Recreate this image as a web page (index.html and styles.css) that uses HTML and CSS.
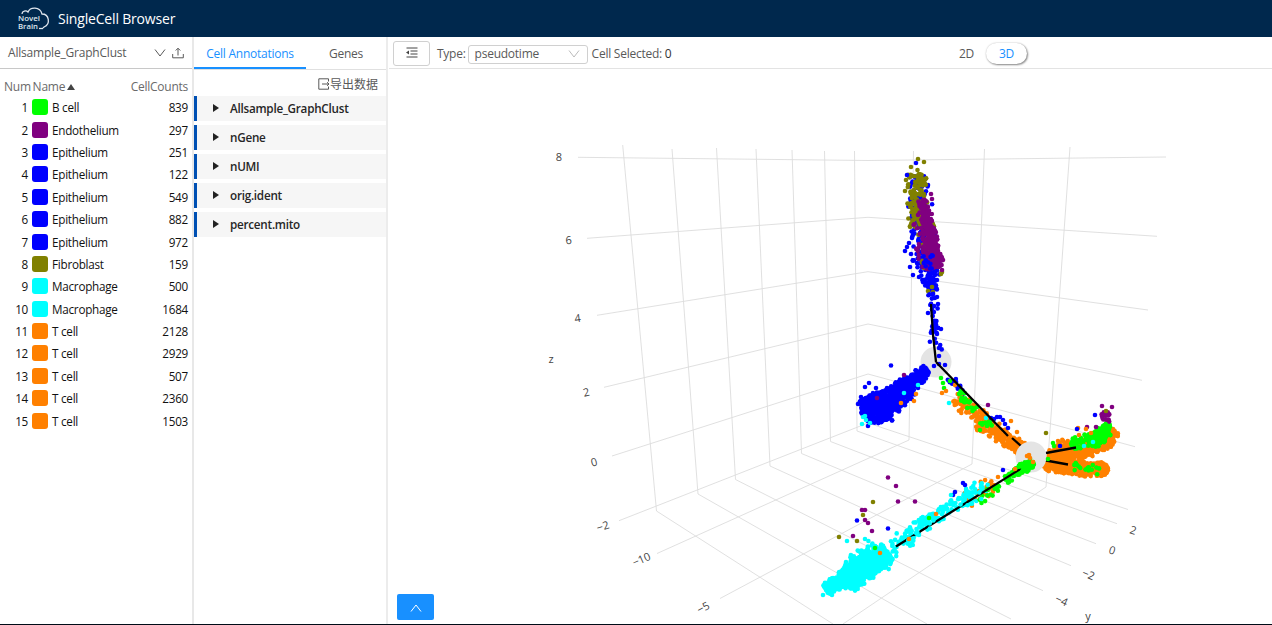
FILE: index.html
```html
<!DOCTYPE html>
<html lang="en">

<head>
    <meta charset="UTF-8">
    <meta name="viewport" content="width=device-width, initial-scale=1.0">
    <title>SingleCell Browser</title>
    <link rel="stylesheet" href="styles.css">
    <script src="plot.js" defer></script>
</head>

<body>
    <header class="top-bar">
        <svg class="logo" width="34" height="24" viewBox="0 0 34 24">
            <path d="M5 7 C5 4 9 3 11 5 C13 0 23 -1 25 7 C32 7 34 17 27 20 L26 21" />
            <text x="1" y="14" textLength="22" lengthAdjust="spacingAndGlyphs">Novel</text>
            <text x="1" y="22" textLength="20" lengthAdjust="spacingAndGlyphs">Brain</text>
            <path class="thin" d="M22 21.500h4" />
        </svg>
        <h1>SingleCell Browser</h1>
    </header>

    <main>
        <!-- Cluster list -->
        <section class="clusters">
            <div class="cluster-select">
                <span>Allsample_GraphClust</span>
                <svg class="arrow" width="12" height="8" viewBox="0 0 12 8"><path d="M1 .5l5 6.500 5-6.500" /></svg>
                <svg class="upload" width="12" height="12" viewBox="0 0 12 12"><path d="M.7 7v3.800h10.600V7M6 8.500V1.500M3.700 3.500L6 1.200l2.300 2.300" /></svg>
            </div>
            <table>
                <colgroup>
                    <col class="col-num">
                    <col class="col-swatch">
                    <col class="col-name">
                    <col class="col-count">
                </colgroup>
                <thead>
                    <tr><th colspan="3" class="name">Num Name<i class="sort"></i></th><th class="count">CellCounts</th></tr>
                </thead>
                <tbody id="clusterRows"></tbody>
            </table>
        </section>

        <!-- Annotations -->
        <section class="annotations">
            <nav class="tabs">
                <a class="active" href="#">Cell Annotations</a>
                <a href="#">Genes</a>
            </nav>
            <div class="export">
                <svg width="12" height="12" viewBox="0 0 12 12"><path d="M10.500 3.500V.8H.8v10.400h9.700V8.500M4 6h7M9 4.200L11 6 9 7.800" /></svg>
                <span>导出数据</span>
            </div>
            <ul>
                <li>Allsample_GraphClust</li>
                <li>nGene</li>
                <li>nUMI</li>
                <li>orig.ident</li>
                <li>percent.mito</li>
            </ul>
        </section>

        <!-- Plot -->
        <section class="plot">
            <div class="toolbar">
                <button class="fold">
                    <svg width="12" height="11" viewBox="0 0 12 11"><path d="M.5 1h11M4.500 4h7M4.500 7h7M.5 10h11" /><path class="fill" d="M0 5.500l3-2v4z" /></svg>
                </button>
                <label>Type:</label>
                <div class="select">
                    <span>pseudotime</span>
                    <svg width="12" height="8" viewBox="0 0 12 8"><path d="M1 .5l5 6.500 5-6.500" /></svg>
                </div>
                <span class="selected">Cell Selected: <b>0</b></span>
                <div class="dimension">
                    <a href="#">2D</a>
                    <a class="active" href="#">3D</a>
                </div>
            </div>
            <div class="scene">
                <svg id="scatter" width="883" height="555" viewBox="389 69 883 555"></svg>
                <button class="expand">
                    <svg width="12" height="8" viewBox="0 0 12 8"><path d="M1 7.500L6 1l5 6.500" /></svg>
                </button>
            </div>
        </section>
    </main>
</body>

</html>
```
FILE: styles.css
```css
/* General styles */
* {
    box-sizing: border-box;
}

body {
    margin: 0;
    height: 625px;
    overflow: hidden;
    display: flex;
    flex-direction: column;
    font-family: "Open Sans", "Noto Sans CJK SC", sans-serif;
    font-size: 12px;
    letter-spacing: -0.25px;
    color: #595959;
    background: #fff;
    border-bottom: 1px solid #000c17;
}

a {
    color: inherit;
    text-decoration: none;
}

svg path {
    fill: none;
    stroke: currentColor;
}

svg path.fill {
    fill: currentColor;
    stroke: none;
}

/* Header */
.top-bar {
    flex: none;
    height: 37px;
    display: flex;
    align-items: center;
    padding-left: 17px;
    gap: 7px;
    color: #fff;
    background: #00284d;
}

.top-bar h1 {
    margin: 0;
    font-size: 14px;
    font-weight: 400;
    letter-spacing: -0.18px;
}

.logo {
    color: #dfe6ee;
    margin-top: 1px;
}

.logo path {
    stroke-width: 1.3;
}

.logo text {
    font-size: 7.5px;
    font-weight: 600;
    letter-spacing: 0;
    fill: currentColor;
}

main {
    flex: 1;
    min-height: 0;
    display: grid;
    grid-template-columns: 194px 195px 1fr;
}

/* Cluster list */
.clusters {
    width: 194px;
    border-right: 2px solid #e8e8e8;
}

.cluster-select {
    height: 32px;
    display: flex;
    align-items: center;
    padding: 0 8px;
    letter-spacing: -0.2px;
    border-bottom: 1px solid #c8c8c8;
}

.cluster-select .arrow {
    margin-left: auto;
    margin-right: 6px;
}

table {
    margin-top: 7px;
    width: 188px;
    table-layout: fixed;
    border-collapse: collapse;
    color: #111;
}

.col-num {
    width: 32px;
}

.col-swatch {
    width: 20px;
}

.col-count {
    width: 60px;
}

th {
    height: 20px;
    padding: 0;
    font-weight: 400;
    color: #6a6a6a;
}

th.name {
    padding-left: 4px;
    word-spacing: -1px;
}

td {
    height: 22.4px;
    padding: 0;
    line-height: 16px;
    font-size: 11.7px;
}

td.num {
    text-align: right;
    padding-right: 4px;
}

.name {
    text-align: left;
}

.count {
    text-align: right;
}

.sort {
    display: inline-block;
    margin: 0 0 1px 2px;
    border: 4px solid transparent;
    border-top: 0;
    border-bottom: 6px solid #444;
}

.swatch {
    display: block;
    width: 16px;
    height: 16px;
    border-radius: 3px;
}

/* Annotations */
.annotations {
    width: 194px;
    border-right: 2px solid #ececec;
}

.tabs {
    height: 33px;
    display: flex;
    border-bottom: 1px solid #e0e0e0;
}

.tabs a {
    height: 32px;
    line-height: 34px;
    width: 112px;
    text-align: center;
}

.tabs a + a {
    width: 80px;
}

.tabs .active {
    color: #1890ff;
    border-bottom: 2px solid #1890ff;
}

.export {
    height: 26px;
    padding: 2px 8px 0 0;
    display: flex;
    align-items: center;
    justify-content: flex-end;
    letter-spacing: 0;
}

.annotations ul {
    list-style: none;
    margin: 0;
    padding: 0;
}

.annotations li {
    display: flex;
    align-items: center;
    height: 25px;
    margin-bottom: 4px;
    padding: 0 0 1px 16px;
    border-left: 3px solid #0050b3;
    background: #f6f6f6;
    color: #262626;
    font-size: 11.7px;
    font-weight: 600;
}

.annotations li::before {
    content: "";
    margin-right: 11px;
    border: 4px solid transparent;
    border-left: 6px solid #222;
    border-right: 0;
}

/* Plot */
.toolbar {
    height: 32px;
    padding: 2px 245px 0 4px;
    display: flex;
    align-items: center;
    border-bottom: 1px solid #e3e3e3;
}

.fold {
    width: 37px;
    height: 25px;
    padding: 0;
    margin-right: 7px;
    border: 1px solid #d0d0d0;
    border-radius: 3px;
    background: #fff;
    color: #444;
}

.select {
    width: 120px;
    height: 19px;
    margin: 1px 4px 0 2px;
    padding: 0 7px 1px 6px;
    display: flex;
    align-items: center;
    justify-content: space-between;
    border: 1px solid #d0d0d0;
    border-radius: 3px;
}

.select svg {
    color: #bbb;
}

.selected b {
    font-weight: 400;
    color: #333;
}

.dimension {
    margin-left: auto;
    display: flex;
    align-items: center;
    gap: 12px;
}

.dimension .active {
    width: 41px;
    height: 21px;
    line-height: 21px;
    text-align: center;
    border-radius: 11px;
    color: #1890ff;
    box-shadow: 1px 1px 2px #888, 0 0 2px #ccc;
}

.scene {
    position: relative;
}

#scatter {
    display: block;
}

#scatter text {
    font-size: 11px;
    letter-spacing: 0;
    fill: #444;
    text-anchor: middle;
}

#scatter .grid {
    stroke: #dcdcdc;
    stroke-width: 0.9;
    fill: none;
}

#scatter .path {
    stroke: #000;
    stroke-width: 2.3;
    fill: none;
}

#scatter .node {
    fill: #e4e4e4;
}

.expand {
    position: absolute;
    left: 8px;
    bottom: 4px;
    width: 37px;
    height: 26px;
    padding: 0;
    border: 0;
    border-radius: 2px;
    background: #1890ff;
    color: #fff;
}
```
FILE: plot.js
```js
const COLORS = {
    green: '#00ff00',
    purple: '#800080',
    blue: '#0000ff',
    olive: '#808000',
    cyan: '#00ffff',
    orange: '#ff8000'
};

const clusters = [
    ['B cell', 'green', 839],
    ['Endothelium', 'purple', 297],
    ['Epithelium', 'blue', 251],
    ['Epithelium', 'blue', 122],
    ['Epithelium', 'blue', 549],
    ['Epithelium', 'blue', 882],
    ['Epithelium', 'blue', 972],
    ['Fibroblast', 'olive', 159],
    ['Macrophage', 'cyan', 500],
    ['Macrophage', 'cyan', 1684],
    ['T cell', 'orange', 2128],
    ['T cell', 'orange', 2929],
    ['T cell', 'orange', 507],
    ['T cell', 'orange', 2360],
    ['T cell', 'orange', 1503]
];

document.getElementById('clusterRows').innerHTML = clusters.map((c, i) =>
    `<tr><td class="num">${i + 1}</td><td><i class="swatch" style="background:${COLORS[c[1]]}"></i></td>` +
    `<td class="name">${c[0]}</td><td class="count">${c[2]}</td></tr>`
).join('');

const gridLines = [
    // z levels, across both walls
    '578,157.300 868,160.500 1166,157', '587,238.300 868,217.300 1157,236.300', '597,315.300 868,271.700 1148,310',
    '604,387.300 868,324 1142,380.300', '612,456 868,374 1135,446.700', '619,520.700 868,423 1128,509.500',
    // left wall down to the floor
    '622.700,145 656.500,511 833,624', '672,149 698,494 927,624', '716.500,148 735.500,479.500 1011,619',
    '756,149 770,466 1043,590.700', '792,150 801.500,453.500 1071,565.700', '824.500,151 830.500,441.500 1096,543.700',
    '854.500,151 857,431 1117,523.700',
    // right wall down to the floor
    '913.500,151 909,440 657,553.500', '984.500,149 972,464 720,598.500', '1070,147 1046,487 843,624'
];

const labels = [
    ['8', 559, 161, 0], ['6', 569, 244, -4], ['4', 578, 322, -8], ['2', 587, 396, -12],
    ['0', 595, 466, -15], ['−2', 604, 530, -18], ['z', 551, 363, 0],
    ['−10', 643, 563, -24], ['−5', 705, 611, -28],
    ['2', 1132, 534, 18], ['0', 1111, 554, 18], ['−2', 1087, 578, 22], ['−4', 1060, 604, 24], ['y', 1088, 620, 0]
];

let seed = 7;
function rand() {
    seed = (seed * 16807) % 2147483647;
    return seed / 2147483647;
}

function dot(x, y, color) {
    return `<circle cx="${x.toFixed(1)}" cy="${y.toFixed(1)}" r="2.3" fill="${COLORS[color]}"/>`;
}

// scatter n cells along a line whose half width goes from w1 to w2
function strip(color, n, x1, y1, x2, y2, w1, w2) {
    const len = Math.hypot(x2 - x1, y2 - y1);
    let out = '';
    for (let i = 0; i < n; i++) {
        const t = rand();
        const off = (rand() + rand() - 1) * 1.15 * (w1 + (w2 - w1) * t);
        out += dot(x1 + (x2 - x1) * t - (y2 - y1) / len * off, y1 + (y2 - y1) * t + (x2 - x1) / len * off, color);
    }
    return out;
}

// round group of n cells
function blob(color, n, x, y, r) {
    let out = '';
    for (let i = 0; i < n; i++) {
        const a = rand() * Math.PI * 2;
        const d = Math.sqrt(rand()) * r;
        out += dot(x + Math.cos(a) * d, y + Math.sin(a) * d, color);
    }
    return out;
}

function cells(color, list) {
    return list.map(p => dot(p[0], p[1], color)).join('');
}

function line(points) {
    return `<polyline class="path" points="${points}"/>`;
}

let svg = gridLines.map(p => `<polyline class="grid" points="${p}"/>`).join('');
svg += labels.map(l => `<text transform="translate(${l[1]} ${l[2]}) rotate(${l[3]})">${l[0]}</text>`).join('');
svg += '<circle class="node" cx="936" cy="362" r="15.500"/>';

// upper branch
svg += strip('blue', 170, 917, 176, 927, 270, 9, 14);
svg += strip('blue', 70, 929, 262, 931, 290, 12, 6);
svg += strip('olive', 130, 917, 174, 918, 228, 9, 10);
svg += strip('olive', 35, 917, 200, 934, 275, 14, 13);
svg += strip('purple', 220, 923, 200, 935, 268, 5, 9);
svg += strip('purple', 90, 928, 225, 934, 270, 8, 9);
svg += strip('purple', 14, 916, 215, 922, 275, 8, 9);
svg += strip('blue', 16, 926, 255, 933, 282, 9, 8);
svg += cells('blue', [[916, 163], [907, 175], [905, 251], [911, 254], [907, 247], [910, 267], [913, 275], [919, 277], [912, 238], [909, 243]]);
svg += cells('olive', [[918, 159], [924, 162], [911, 167], [917.500, 170], [906, 180], [905, 191], [941, 274], [942, 272], [928, 291], [932, 287], [933, 292]]);
svg += cells('purple', [[932, 199], [931, 194], [943, 260], [942, 270]]);
svg += strip('blue', 32, 932, 292, 937, 350, 6, 6);
svg += line('931,304 933,335 936,362');
svg += cells('blue', [[937, 297], [938, 304], [928, 313], [938, 328], [941, 329], [937, 334], [939, 348], [939, 356], [945, 365], [934, 366], [939, 364]]);

// left branch
svg += strip('blue', 220, 927, 369, 902, 392, 5, 11);
svg += strip('blue', 550, 910, 385, 878, 411, 9, 16);
svg += blob('blue', 260, 876, 409, 15);
svg += blob('blue', 50, 868, 405, 9);
svg += cells('blue', [[891, 365.500], [869, 383], [876, 388], [865, 387], [861, 397], [873, 393], [887, 388], [858, 404], [868, 426]]);
svg += cells('purple', [[904, 375], [877, 398]]);
svg += cells('cyan', [[918, 385], [904, 393], [863, 417], [866, 420], [870, 423], [862, 424], [865, 416]]);
svg += cells('orange', [[916, 394], [914, 401], [901, 403]]);

// middle branch
svg += strip('blue', 14, 948, 376, 965, 393, 4, 4);
svg += strip('orange', 70, 955, 396, 985, 422, 8, 11);
svg += strip('orange', 210, 979, 421, 1023, 450, 10, 7);
svg += strip('green', 24, 959, 392, 974, 410, 5, 5);
svg += strip('green', 12, 982, 421, 990, 428, 7, 6);
svg += cells('green', [[941, 378], [943, 383], [944, 388], [950, 381], [980, 430]]);
svg += cells('orange', [[942, 393], [955, 385], [946, 391], [1011, 421], [1017, 432]]);
svg += cells('blue', [[994, 419], [997, 417], [1000, 417], [1003, 420], [1005, 424], [1008, 428], [991, 418]]);
svg += cells('cyan', [[949, 403], [986, 418]]);
svg += cells('purple', [[988, 405]]);
svg += line('936,362 1008,436');
svg += line('1012,438 1021,446');

// right branches
svg += strip('orange', 300, 1048, 456, 1092, 449, 6, 10);
svg += strip('orange', 170, 1086, 449, 1110, 438, 9, 9);
svg += blob('orange', 70, 1110, 435, 8);
svg += strip('orange', 230, 1044, 465, 1086, 470, 5, 8);
svg += strip('orange', 80, 1084, 470, 1100, 469, 6, 8);
svg += blob('orange', 90, 1101, 469, 7);
svg += strip('orange', 12, 1055, 445, 1069, 444, 5, 7);
svg += strip('green', 55, 1071, 443, 1095, 439, 6, 7);
svg += strip('green', 110, 1090, 443, 1107, 430, 8, 7);
svg += blob('green', 14, 1107, 426, 4);
svg += strip('green', 20, 1066, 464, 1100, 470, 4, 5);
svg += '<circle class="node" cx="1031" cy="457" r="15.500"/>';
svg += line('1046,453 1076,447.500');
svg += line('1046,460.500 1068,464.500');
svg += strip('purple', 16, 1107, 411, 1104, 423, 5, 4);
svg += cells('purple', [[1102, 406], [1112, 407], [1087, 427], [1096, 427]]);
svg += cells('green', [[1053, 443], [1054, 446], [1048, 459]]);
svg += cells('orange', [[1058, 441], [1063, 441], [1078, 428], [1086, 429], [1091, 433], [1079, 435]]);
svg += cells('blue', [[1095, 415], [1077, 429], [1060, 446]]);
svg += cells('olive', [[1046, 433], [1106, 411]]);
svg += cells('cyan', [[1084, 446], [1093, 442]]);

// lower branch
svg += strip('cyan', 600, 888, 552, 845, 582, 11, 12);
svg += strip('cyan', 350, 868, 563, 826, 590, 16, 6);
svg += strip('cyan', 140, 880, 554, 856, 570, 17, 17);
svg += strip('cyan', 75, 890, 550, 936, 515, 10, 7);
svg += strip('cyan', 50, 925, 525, 970, 494, 5, 8);
svg += strip('orange', 26, 967, 499, 994, 484, 10, 9);
svg += strip('cyan', 34, 964, 502, 986, 482, 8, 8);
svg += strip('green', 18, 979, 500, 1010, 477, 6, 4);
svg += strip('green', 70, 1006, 480, 1033, 462, 4, 6);
svg += line('896,546.500 1022,468');
svg += strip('green', 20, 1020, 470, 1033, 462, 5, 5);
svg += strip('cyan', 26, 905, 540, 980, 492, 9, 8);
svg += cells('orange', [[1027, 456], [1029, 455], [1030, 458], [1033, 462], [1015, 469], [998, 477], [936, 514], [909, 539], [880, 553]]);
svg += cells('blue', [[1003, 470], [963, 483], [965, 485], [955, 492], [953, 495], [857, 520.500], [888, 528.500]]);
svg += cells('purple', [[888, 477.500], [896, 486], [898, 501.500], [915, 501.500], [862, 510], [865, 510], [865, 520], [868, 523], [872, 531], [853, 536]]);
svg += cells('olive', [[873, 502], [863, 515], [839, 537], [857, 541]]);
svg += cells('cyan', [[847, 541], [865, 539], [951, 495], [846, 562], [823, 595], [832, 595]]);
svg += cells('green', [[929, 518], [875, 548]]);

document.getElementById('scatter').innerHTML = svg;
```
